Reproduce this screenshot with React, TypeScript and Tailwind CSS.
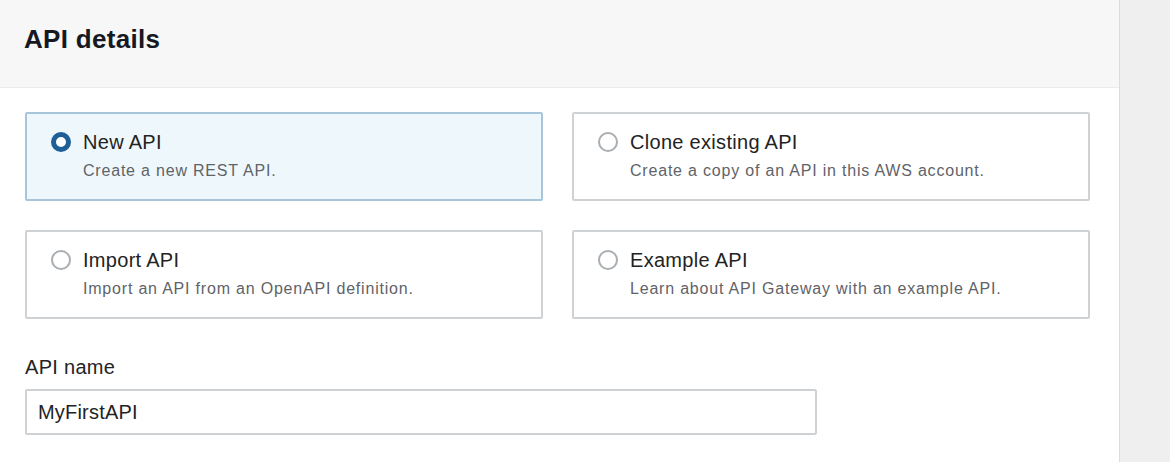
const options = [
  { title: 'New API', desc: 'Create a new REST API.', selected: true },
  { title: 'Clone existing API', desc: 'Create a copy of an API in this AWS account.' },
  { title: 'Import API', desc: 'Import an API from an OpenAPI definition.' },
  { title: 'Example API', desc: 'Learn about API Gateway with an example API.' },
];

function Radio({ checked }: { checked?: boolean }) {
  if (checked) {
    return <span className="block w-[20px] h-[20px] rounded-full border-[5px] border-[#1e5f98] bg-white shrink-0" />;
  }
  return <span className="block w-[20px] h-[20px] rounded-full border-2 border-[#a9aeb3] bg-white shrink-0" />;
}

export default function App() {
  return (
    <div className="flex w-[1170px] h-[462px] bg-white text-[#16191f] font-['Liberation_Sans',Arial,sans-serif] overflow-hidden">
      <div className="w-[1120px] border-r border-[#dcdcdc] flex flex-col">
        {/* Panel header */}
        <div className="h-[88px] bg-[#f7f7f7] border-b border-[#ebebeb] px-[24px] pt-[25px]">
          <h2 className="text-[26px] font-bold leading-[28px] tracking-[0.3px]">API details</h2>
        </div>

        <div className="px-[25px] pt-[24px]">
          <div className="grid grid-cols-[518px_518px] gap-x-[29px] gap-y-[29px]">
            {options.map((o) => (
              <div
                key={o.title}
                className={
                  'h-[89px] rounded-[2px] border-2 flex items-start gap-[12px] pl-[24px] pt-[16px] ' +
                  (o.selected ? 'bg-[#eef8fc] border-[#a8c5da]' : 'bg-white border-[#cfd2d4]')
                }
              >
                <div className="pt-[2px]">
                  <Radio checked={o.selected} />
                </div>
                <div className="flex flex-col">
                  <span className="text-[20px] leading-[24px] tracking-[0.3px] text-[#232323]">{o.title}</span>
                  <span className="text-[16px] leading-[18px] mt-[8px] tracking-[0.8px] text-[#5f6368]">{o.desc}</span>
                </div>
              </div>
            ))}
          </div>

          <label className="block mt-[36px] text-[20px] leading-[24px] tracking-[0.3px] text-[#232323]">API name</label>
          <div className="mt-[10px] w-[792px] h-[46px] border-2 border-[#cfd2d4] rounded-[2px] flex items-center px-[11px]">
            <span className="text-[20px] tracking-[0.2px] text-[#232323]">MyFirstAPI</span>
          </div>
        </div>
      </div>
      <div className="flex-1 bg-[#efefef]" />
    </div>
  );
}
